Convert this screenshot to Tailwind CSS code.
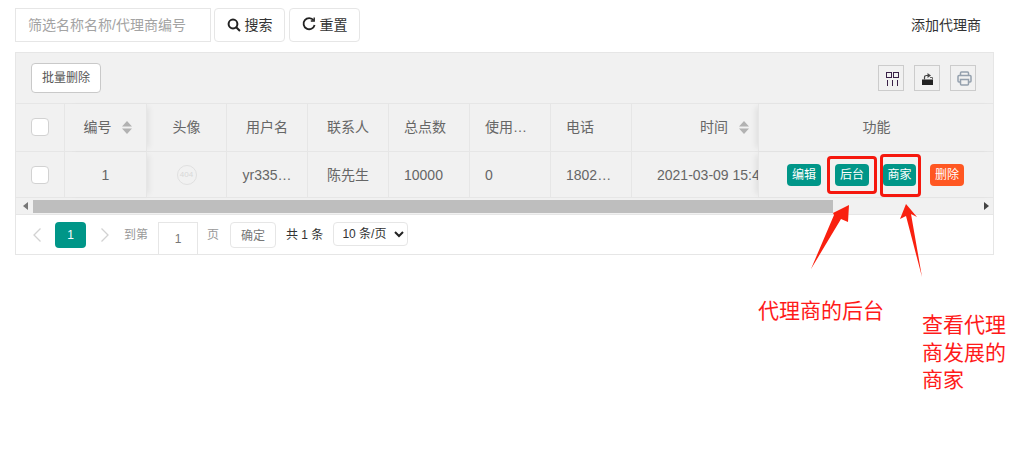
<!DOCTYPE html>
<html lang="zh-CN">

<head>
  <meta charset="UTF-8" />
  <title>代理商列表</title>
  <meta name="viewport" content="width=device-width, initial-scale=1.0" />
  <script src="https://cdn.jsdelivr.net/npm/@tailwindcss/browser@4"></script>
</head>

<body class="relative h-[474px] w-[1030px] overflow-hidden bg-white font-['Liberation_Sans','Noto_Sans_CJK_SC',sans-serif] text-sm text-[#666]">
  <!-- Search bar -->
  <div class="flex h-[34px] mt-2 ml-[15px] w-[979px] items-center">
    <div class="flex h-[34px] w-[196px] items-center border border-[#e6e6e6] pl-3 text-[#a3a3a3]">筛选名称名称/代理商编号</div>
    <button class="ml-[3px] flex h-[34px] w-[71px] items-center justify-center gap-1 rounded-sm border border-[#e6e6e6] text-[#333]">
      <svg class="h-[14px] w-[14px]" viewBox="0 0 14 14" fill="none" stroke="#222" stroke-width="2"><circle cx="6" cy="6" r="4.4" /><path d="M9.2 9.2 13 13" /></svg>
      搜索
    </button>
    <button class="ml-1 flex h-[34px] w-[71px] items-center justify-center gap-1 rounded-sm border border-[#e6e6e6] text-[#333]">
      <svg class="h-[14px] w-[14px] -translate-y-px" viewBox="0 0 14 14" fill="none" stroke="#222" stroke-width="1.8"><path d="M11.6 3.2A5.6 5.6 0 1 0 12.6 8" /><path d="M12.2 0.6v3.4H8.8" stroke-width="1.4" /></svg>
      重置
    </button>
    <a href="#" class="ml-auto mr-[13px] text-[#333]">添加代理商</a>
  </div>

  <!-- Table -->
  <div class="mt-[10px] ml-[15px] h-[203px] w-[979px] border border-[#e6e6e6] bg-[#f1f1f1]">
    <div class="flex h-[50px] items-center justify-between pl-[15px] pr-[17px]">
      <button class="h-[30px] w-[70px] rounded-sm border border-[#c9c9c9] bg-white text-xs text-[#555]">批量删除</button>
      <div class="flex gap-[10px]">
        <div class="flex h-[26px] w-[26px] items-center justify-center border border-[#ccc]">
          <svg class="h-[14px] w-[14px] translate-x-px translate-y-px" viewBox="0 0 14 14" fill="none" stroke="#3a2148" stroke-width="1" shape-rendering="crispEdges"><path d="M1.500.5h5v5h-5zM8.500.5h5v5h-5zM2.500 8v6M7.500 8v6M12.500 8v6" /></svg>
        </div>
        <div class="flex h-[26px] w-[26px] items-center justify-center border border-[#ccc]">
          <svg class="h-[14px] w-[13px] translate-y-px" viewBox="0 0 13 14"><path d="M1 7.500h11V13H1z" fill="#222" /><path d="M3.500 7.500V5.500Q3.500 3.500 5.500 3.500H7" fill="none" stroke="#444" stroke-width="1.200" /><path d="M6.500 1 10 3.500 6.500 6z" fill="#444" /><path d="M9 5.500h2.500v2" fill="none" stroke="#666" /></svg>
        </div>
        <div class="flex h-[26px] w-[26px] items-center justify-center border border-[#ccc]">
          <svg class="h-[15px] w-[15px] translate-x-px" viewBox="0 0 15 15" fill="none" stroke="#94a0ad" stroke-width="1.500"><path d="M3.500 4.500V2q0-1 1-1h6q1 0 1 1v2.500M3.500 11H2q-1 0-1-1V5.500q0-1 1-1h11q1 0 1 1V10q0 1-1 1h-1.500M3.500 8.500h8V13q0 1-1 1h-6q-1 0-1-1z" /></svg>
        </div>
      </div>
    </div>

    <div class="grid h-[48px] grid-cols-[49px_82px_80px_81px_81px_81px_81px_81px_126px_236px] border-t border-[#e6e6e6]">
      <div class="flex items-center justify-center border-r border-[#e6e6e6] pb-px"><span class="h-[18px] w-[18px] rounded-sm border border-[#d2d2d2] bg-white"></span></div>
      <div class="relative flex items-center justify-center gap-[10px] border-r border-[#e6e6e6] pl-1 pb-px shadow-[5px_0_6px_-3px_rgba(0,0,0,0.07)]">编号
        <svg class="h-[13px] w-[10px]" viewBox="0 0 10 13" fill="#b2b2b2"><path d="M5 0l5 5.500H0zM5 13l5-5.500H0z" /></svg>
      </div>
      <div class="flex items-center justify-center border-r border-[#e6e6e6] pb-px">头像</div>
      <div class="flex items-center justify-center border-r border-[#e6e6e6] pb-px">用户名</div>
      <div class="flex items-center justify-center border-r border-[#e6e6e6] pb-px">联系人</div>
      <div class="flex items-center pl-[15px] border-r border-[#e6e6e6] pb-px">总点数</div>
      <div class="flex items-center pl-[15px] border-r border-[#e6e6e6] pb-px">使用…</div>
      <div class="flex items-center pl-[15px] border-r border-[#e6e6e6] pb-px">电话</div>
      <div class="flex items-center gap-[11px] pl-[68px] pb-px">时间
        <svg class="h-[13px] w-[10px]" viewBox="0 0 10 13" fill="#b2b2b2"><path d="M5 0l5 5.500H0zM5 13l5-5.500H0z" /></svg>
      </div>
      <div class="relative flex items-center justify-center border-l border-[#e6e6e6] pb-px shadow-[-5px_0_6px_-3px_rgba(0,0,0,0.08)]">功能</div>
    </div>

    <div class="grid h-[47px] grid-cols-[49px_82px_80px_81px_81px_81px_81px_81px_126px_236px] border-y border-[#e6e6e6]">
      <div class="flex items-center justify-center border-r border-[#e6e6e6]"><span class="h-[18px] w-[18px] rounded-sm border border-[#d2d2d2] bg-white"></span></div>
      <div class="relative flex items-center justify-center border-r border-[#e6e6e6] shadow-[5px_0_6px_-3px_rgba(0,0,0,0.07)]">1</div>
      <div class="flex items-center justify-center border-r border-[#e6e6e6]">
        <div class="flex h-5 w-5 items-center justify-center rounded-full border border-[#e0e0e0] text-[8px] text-[#d8d8d8]">404</div>
      </div>
      <div class="flex items-center justify-center border-r border-[#e6e6e6]">yr335…</div>
      <div class="flex items-center justify-center border-r border-[#e6e6e6]">陈先生</div>
      <div class="flex items-center pl-[15px] border-r border-[#e6e6e6]">10000</div>
      <div class="flex items-center pl-[15px] border-r border-[#e6e6e6]">0</div>
      <div class="flex items-center pl-[15px] border-r border-[#e6e6e6]">1802…</div>
      <div class="flex items-center overflow-hidden whitespace-nowrap pl-[25px]">2021-03-09 15:44:21</div>
      <div class="relative flex items-center gap-[14px] border-l border-[#e6e6e6] pl-7 text-xs text-white shadow-[-5px_0_6px_-3px_rgba(0,0,0,0.08)]">
        <span class="flex h-[22px] w-[34px] items-center justify-center rounded-sm bg-[#009688]">编辑</span>
        <span class="flex h-[22px] w-[34px] items-center justify-center rounded-sm bg-[#009688]">后台</span>
        <span class="flex h-[22px] w-[33px] items-center justify-center rounded-sm bg-[#009688]">商家</span>
        <span class="flex h-[22px] w-[34px] items-center justify-center rounded-sm bg-[#FF5722]">删除</span>
      </div>
    </div>

    <!-- Scrollbar -->
    <div class="flex h-[17px] items-center border-b border-[#e6e6e6]">
      <svg class="ml-[7px] h-2 w-[5px]" viewBox="0 0 5 8" fill="#777"><path d="M5 0v8L0 4z" /></svg>
      <div class="ml-[5px] h-[13px] w-[800px] bg-[#bebebe]"></div>
      <svg class="ml-[151px] h-2 w-[5px]" viewBox="0 0 5 8" fill="#444"><path d="M0 0v8l5-4z" /></svg>
    </div>

    <!-- Pagination -->
    <div class="flex h-[39px] items-start bg-white pt-[7px] text-xs">
      <svg class="ml-[15px] mt-[6px] h-[14px] w-[12px]" viewBox="0 0 12 14" fill="none" stroke="#d2d2d2" stroke-width="1.300"><path d="M9.500.5 3 7l6.500 6.500" /></svg>
      <div class="ml-3 flex h-[26px] w-[31px] items-center justify-center rounded-sm bg-[#009688] text-white">1</div>
      <svg class="ml-[13px] mt-[6px] h-[14px] w-[12px]" viewBox="0 0 12 14" fill="none" stroke="#d2d2d2" stroke-width="1.300"><path d="M2.500.5 9 7l-6.500 6.500" /></svg>
      <span class="ml-[13px] mt-[5px] text-[#999]">到第</span>
      <div class="ml-[10px] flex h-[32px] w-10 items-center justify-center border-x border-t border-[#e6e6e6] pt-px text-[#777]">1</div>
      <span class="ml-[9px] mt-[5px] text-[#999]">页</span>
      <button class="ml-[11px] h-[26px] w-[46px] rounded-sm border border-[#e6e6e6] pt-px text-[#777]">确定</button>
      <span class="ml-[10px] mt-[5px] text-[#333]">共 1 条</span>
      <div class="ml-[10px] flex h-6 w-[75px] items-center justify-between rounded-sm border border-[#e6e6e6] pl-2 pr-[3px] text-[#333]">10 条/页
        <svg class="h-[7px] w-[10px]" viewBox="0 0 10 7" fill="none" stroke="#222" stroke-width="2"><path d="M1 1l4 4 4-4" /></svg>
      </div>
    </div>
  </div>

  <!-- Red annotations drawn over the screenshot -->
  <div class="absolute left-[827px] top-[156px] h-[38px] w-[50px] rounded-sm border-[3px] border-[#f5170d]"></div>
  <div class="absolute left-[880px] top-[154px] h-[43px] w-[41px] rounded-sm border-[3px] border-[#f5170d]"></div>
  <svg class="absolute left-0 top-0 h-[474px] w-[1030px]" viewBox="0 0 1030 474" fill="#f9200f">
    <path d="M849 205 848 222 841 219 811 269 834 215 833 213z" />
    <path d="M906 204 917 217 911 214 922 277 906 216 900 219z" />
  </svg>
  <div class="absolute left-[758px] top-[297px] text-[21px] leading-[28px] text-[#ff1a1a]">代理商的后台</div>
  <div class="absolute left-[922px] top-[311px] w-[84px] text-[21px] leading-[27.500px] text-[#ff1a1a]">查看代理商发展的商家</div>
</body>
</html>
